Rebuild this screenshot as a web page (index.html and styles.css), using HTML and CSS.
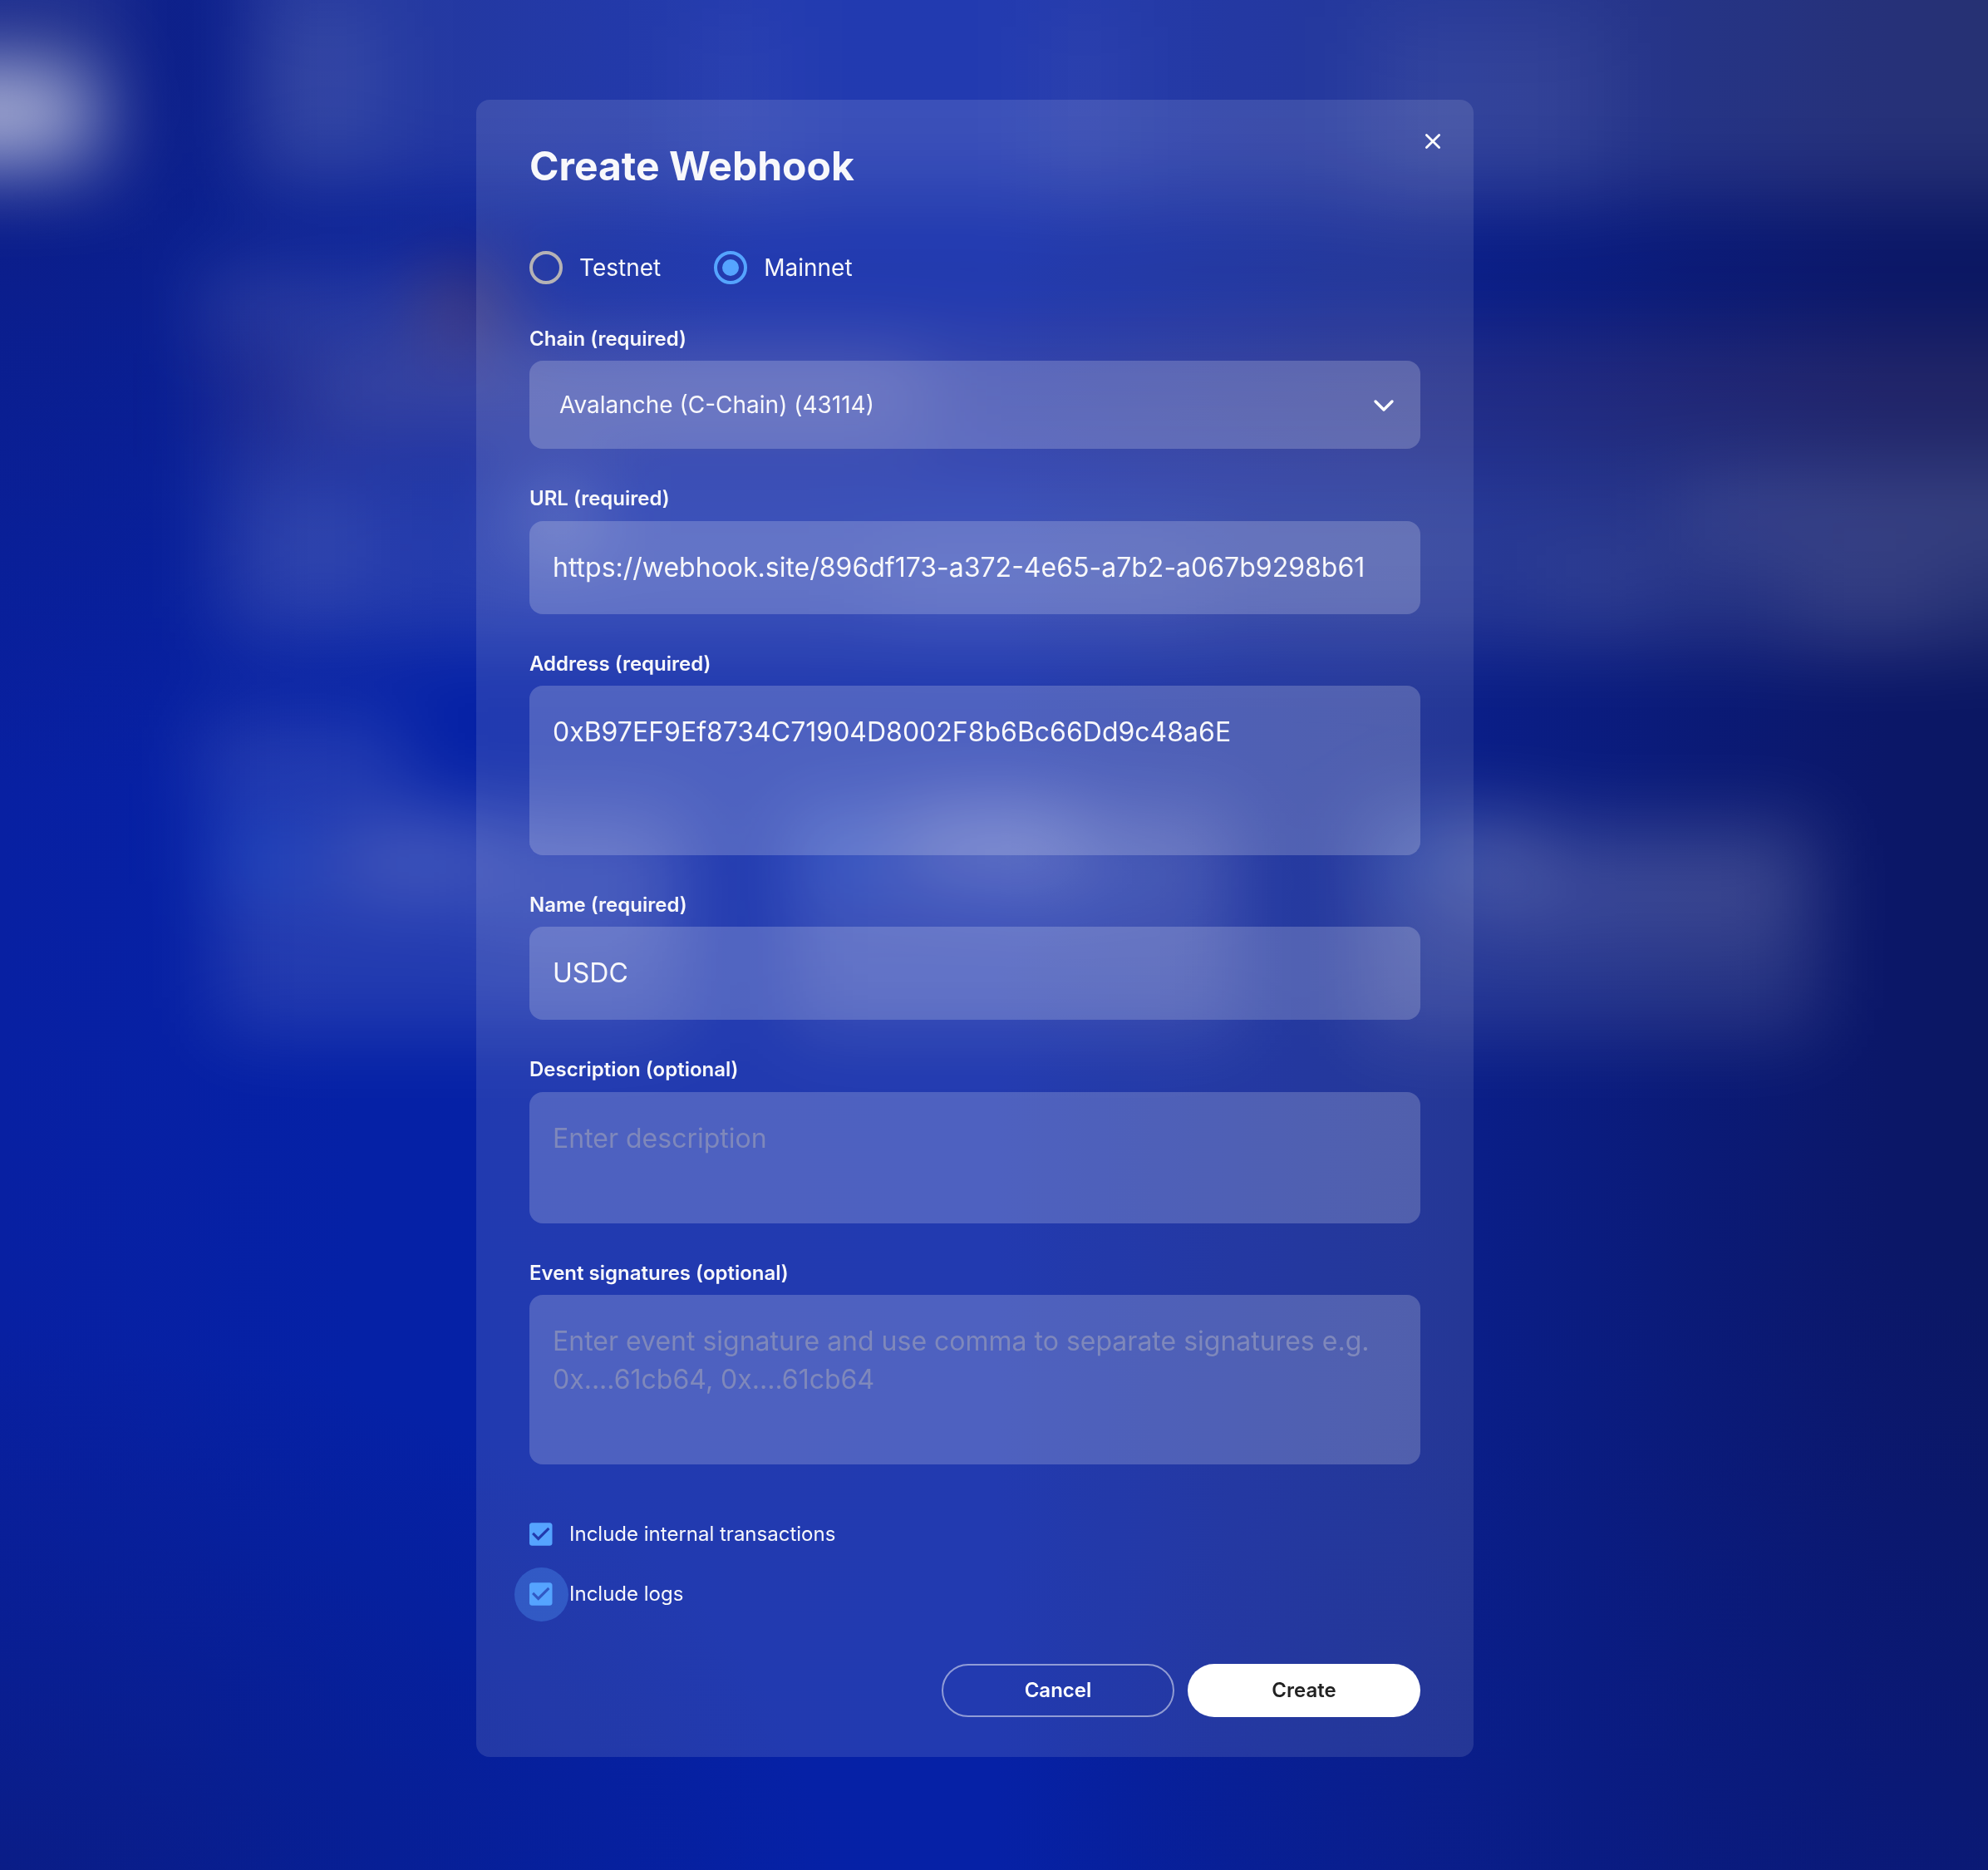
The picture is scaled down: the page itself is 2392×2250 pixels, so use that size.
FILE: index.html
```html
<!DOCTYPE html>
<html lang="en">
<head>
<meta charset="utf-8">
<title>Create Webhook</title>
<link rel="stylesheet" href="styles.css">
</head>
<body>
<svg class="backdrop" viewBox="0 0 2392 2250" preserveAspectRatio="none" aria-hidden="true">
  <defs>
    <filter id="soft" filterUnits="userSpaceOnUse" x="-300" y="-300" width="3000" height="2850" color-interpolation-filters="sRGB"><feGaussianBlur stdDeviation="48"/></filter>
  </defs>
  <g filter="url(#soft)">
    <!-- top navigation -->
    <rect x="290" y="-300" width="2402" height="535" fill="#fff" opacity=".115"/>
    <rect x="330" y="0" width="130" height="190" fill="#fff" opacity=".08"/>
    <rect x="830" y="0" width="110" height="240" fill="#fff" opacity=".045"/>
    <rect x="1250" y="0" width="110" height="240" fill="#fff" opacity=".045"/>
    <rect x="1650" y="20" width="280" height="220" fill="#fff" opacity=".06"/>
    <rect x="-200" y="-200" width="360" height="440" fill="#fff" opacity=".08"/>
    <rect x="-200" y="82" width="310" height="108" rx="30" fill="#fff" opacity=".66"/>
    <!-- page heading -->
    <rect x="240" y="325" width="280" height="70" fill="#fff" opacity=".15"/>
    <rect x="520" y="325" width="75" height="80" fill="#c0703a" opacity=".48"/>
    <rect x="250" y="400" width="2500" height="150" fill="#ffb080" opacity=".095"/>
    <rect x="370" y="430" width="740" height="80" fill="#fff" opacity=".14"/>
    <rect x="260" y="555" width="2400" height="220" fill="#fff" opacity=".12"/>
    <rect x="330" y="590" width="110" height="130" fill="#fff" opacity=".06"/>
    <rect x="640" y="590" width="60" height="60" fill="#fff" opacity=".42"/>
    <rect x="1050" y="660" width="400" height="90" fill="#fff" opacity=".05"/>
    <rect x="1860" y="680" width="120" height="60" fill="#fff" opacity=".05"/>
    <rect x="2030" y="570" width="600" height="90" fill="#fff" opacity=".08"/>
    <rect x="2160" y="690" width="180" height="80" fill="#fff" opacity=".07"/>
    <!-- feature cards -->
    <rect x="240" y="870" width="250" height="80" fill="#fff" opacity=".15"/>
    <rect x="260" y="975" width="570" height="270" fill="#fff" opacity=".12"/>
    <rect x="260" y="990" width="110" height="80" fill="#3c8cff" opacity=".22"/>
    <rect x="410" y="985" width="180" height="90" fill="#fff" opacity=".17"/>
    <rect x="590" y="1000" width="210" height="120" fill="#fff" opacity=".08"/>
    <rect x="950" y="975" width="540" height="270" fill="#fff" opacity=".12"/>
    <rect x="960" y="980" width="100" height="90" fill="#3c8cff" opacity=".22"/>
    <rect x="1090" y="970" width="200" height="90" fill="#fff" opacity=".23"/>
    <rect x="1240" y="990" width="220" height="90" fill="#fff" opacity=".08"/>
    <rect x="1640" y="985" width="550" height="260" fill="#fff" opacity=".125"/>
    <rect x="1650" y="980" width="100" height="90" fill="#3c8cff" opacity=".18"/>
    <rect x="1740" y="980" width="110" height="90" fill="#fff" opacity=".14"/>
    <rect x="1760" y="1020" width="400" height="100" fill="#fff" opacity=".09"/>
  </g>
</svg>
<main class="stage">
  <form class="modal">
    <button class="close" type="button" aria-label="Close"><svg viewBox="0 0 20 20"><path d="M2.4 2.4l15.2 15.2M17.6 2.4L2.4 17.6"/></svg></button>
    <h1 class="title">Create Webhook</h1>
    <div class="radios">
      <label class="radio"><span class="ring"></span>Testnet</label>
      <label class="radio"><span class="ring ring-on"></span>Mainnet</label>
    </div>
    <section class="field">
      <span class="label">Chain (required)</span>
      <div class="box select"><span>Avalanche (C-Chain) (43114)</span><svg class="chevron" viewBox="0 0 26 16"><path d="M3 3l10 10L23 3"/></svg></div>
    </section>
    <section class="field">
      <span class="label label-loose">URL (required)</span>
      <div class="box">https://webhook.site/896df173-a372-4e65-a7b2-a067b9298b61</div>
    </section>
    <section class="field">
      <span class="label">Address (required)</span>
      <div class="box tall">0xB97EF9Ef8734C71904D8002F8b6Bc66Dd9c48a6E</div>
    </section>
    <section class="field">
      <span class="label">Name (required)</span>
      <div class="box">USDC</div>
    </section>
    <section class="field">
      <span class="label label-loose">Description (optional)</span>
      <div class="box medium hint">Enter description</div>
    </section>
    <section class="field">
      <span class="label">Event signatures (optional)</span>
      <div class="box tall hint">Enter event signature and use comma to separate signatures e.g. 0x....61cb64, 0x....61cb64</div>
    </section>
    <div class="checks">
      <label class="check"><svg class="tick" viewBox="3 3 18 18"><path d="M19 3H5c-1.11 0-2 .9-2 2v14c0 1.1.89 2 2 2h14c1.11 0 2-.9 2-2V5c0-1.1-.89-2-2-2zm-9 14l-5-5 1.41-1.41L10 14.17l7.59-7.59L19 8l-9 9z"/></svg><span class="check-text">Include internal transactions</span></label>
      <label class="check focused"><svg class="tick" viewBox="3 3 18 18"><path d="M19 3H5c-1.11 0-2 .9-2 2v14c0 1.1.89 2 2 2h14c1.11 0 2-.9 2-2V5c0-1.1-.89-2-2-2zm-9 14l-5-5 1.41-1.41L10 14.17l7.59-7.59L19 8l-9 9z"/></svg><span class="check-text">Include logs</span></label>
    </div>
    <div class="actions">
      <button class="btn outline" type="button">Cancel</button>
      <button class="btn solid" type="button">Create</button>
    </div>
  </form>
</main>
</body>
</html>
```
FILE: styles.css
```css
* { box-sizing: border-box; }
body {
  margin: 0;
  height: 2250px;
  overflow: hidden;
  font-family: Inter, "Liberation Sans", sans-serif;
  color: #f8f8fb;
  background:
    radial-gradient(ellipse 900px 900px at 60px 60px, rgba(16, 26, 100, .5), rgba(16, 26, 100, 0)),
    radial-gradient(ellipse 1000px 700px at 0 2300px, rgba(12, 26, 110, .55), rgba(12, 26, 110, 0)),
    radial-gradient(ellipse 1100px 900px at 2300px 2400px, rgba(9, 28, 140, .55), rgba(9, 28, 140, 0)),
    linear-gradient(90deg, #0820a2 0%, #0521a6 18%, #0621a6 50%, #0a1e88 74%, #0b1768 95%, #0b1762 100%);
}
.backdrop { position: absolute; inset: 0; width: 2392px; height: 2250px; }
.stage { position: relative; display: flex; padding: 120px 0 0 573px; }
.modal {
  position: relative;
  width: 1200px;
  height: 1994px;
  padding: 50px 64px 48px;
  border-radius: 16px;
  background: rgba(255, 255, 255, .115);
  display: flex;
  flex-direction: column;
}
.close { position: absolute; top: 39.5px; right: 39.5px; width: 20px; height: 20px; padding: 0; border: 0; background: none; }
.close svg { display: block; width: 20px; height: 20px; fill: none; stroke: #fff; stroke-width: 2.8; stroke-linecap: round; }
.title { margin: 0; font-size: 48px; line-height: 60px; font-weight: 700; }
.radios { display: flex; gap: 64px; height: 40px; margin-top: 72px; }
.radio { display: flex; align-items: center; gap: 20px; font-size: 28px; line-height: 40px; }
.ring { width: 40px; height: 40px; border: 4px solid #b5b2b5; border-radius: 50%; display: grid; place-items: center; }
.ring-on { border-color: #55a4ff; }
.ring-on::after { content: ""; width: 20px; height: 20px; border-radius: 50%; background: #55a4ff; }
.field { display: flex; flex-direction: column; margin-top: 46px; }
.radios + .field { margin-top: 52px; }
.label { font-size: 24px; line-height: 28px; font-weight: 600; margin-bottom: 12px; }
.label-loose { margin-bottom: 13px; }
.box {
  height: 112px;
  padding: 33px 28px;
  border-radius: 16px;
  background: rgba(255, 255, 255, .2);
  font-size: 32px;
  line-height: 46px;
}
.tall { height: 204px; }
.medium { height: 158px; }
.hint { color: #7f88bb; }
.select { height: 106px; padding: 0 31px 0 36px; display: flex; align-items: center; justify-content: space-between; font-size: 28px; }
.chevron { width: 26px; height: 16px; margin-top: 2px; fill: none; stroke: #fff; stroke-width: 3.4; stroke-linecap: round; stroke-linejoin: round; }
.checks { display: flex; flex-direction: column; gap: 44px; margin-top: 70px; }
.check { display: flex; align-items: center; gap: 20.5px; height: 28px; font-size: 24px; position: relative; }
.check-text { line-height: 28px; }
.tick { width: 27.5px; height: 28px; fill: #55a4ff; position: relative; }
.focused::before { content: ""; position: absolute; left: -18.5px; top: -18.5px; width: 65.5px; height: 65.5px; border-radius: 50%; background: rgba(85, 164, 255, .3); }
.actions { display: flex; justify-content: flex-end; gap: 16px; margin-top: auto; }
.btn { width: 280px; height: 64px; border-radius: 32px; font: 600 24px Inter, sans-serif; padding: 0 0 2px; }
.outline { border: 2px solid rgba(255, 255, 255, .5); color: #fff; background: none; }
.solid { border: 0; background: #fff; color: #222; }
```
